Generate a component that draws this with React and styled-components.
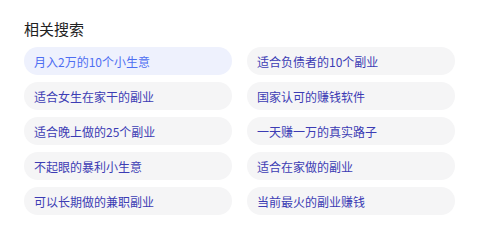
import React from "react"
import styled, { createGlobalStyle } from "styled-components"

const GlobalStyle = createGlobalStyle`
  html, body {
    margin: 0;
    padding: 0;
    background: #ffffff;
  }
  body {
    font-family: "Noto Sans CJK SC", "Noto Sans", Arial, sans-serif;
  }
`

const Panel = styled.div`
  width: 500px;
  height: 241px;
  box-sizing: border-box;
  padding: 19px 0 0 24px;
`

const Title = styled.h3`
  margin: 0 0 8px;
  font-size: 15px;
  line-height: 20px;
  font-weight: 400;
  color: #222222;
`

const Grid = styled.div`
  display: grid;
  grid-template-columns: 208px 208px;
  column-gap: 15px;
  row-gap: 7px;
`

const Pill = styled.a`
  display: flex;
  align-items: center;
  height: 28px;
  padding: 0 10px;
  border-radius: 14px;
  font-size: 12px;
  text-decoration: none;
  white-space: nowrap;
  background: ${p => (p.active ? "#eef1fd" : "#f5f5f6")};
  color: ${p => (p.active ? "#4e6ef2" : "#3c3cb4")};
`

const queries = [
  "月入2万的10个小生意",
  "适合负债者的10个副业",
  "适合女生在家干的副业",
  "国家认可的赚钱软件",
  "适合晚上做的25个副业",
  "一天赚一万的真实路子",
  "不起眼的暴利小生意",
  "适合在家做的副业",
  "可以长期做的兼职副业",
  "当前最火的副业赚钱"
]

export default function App() {
  return (
    <>
      <GlobalStyle />
      <Panel>
        <Title>相关搜索</Title>
        <Grid>
          {queries.map((q, i) => (
            <Pill key={q} href="#" active={i === 0}>
              {q}
            </Pill>
          ))}
        </Grid>
      </Panel>
    </>
  )
}
